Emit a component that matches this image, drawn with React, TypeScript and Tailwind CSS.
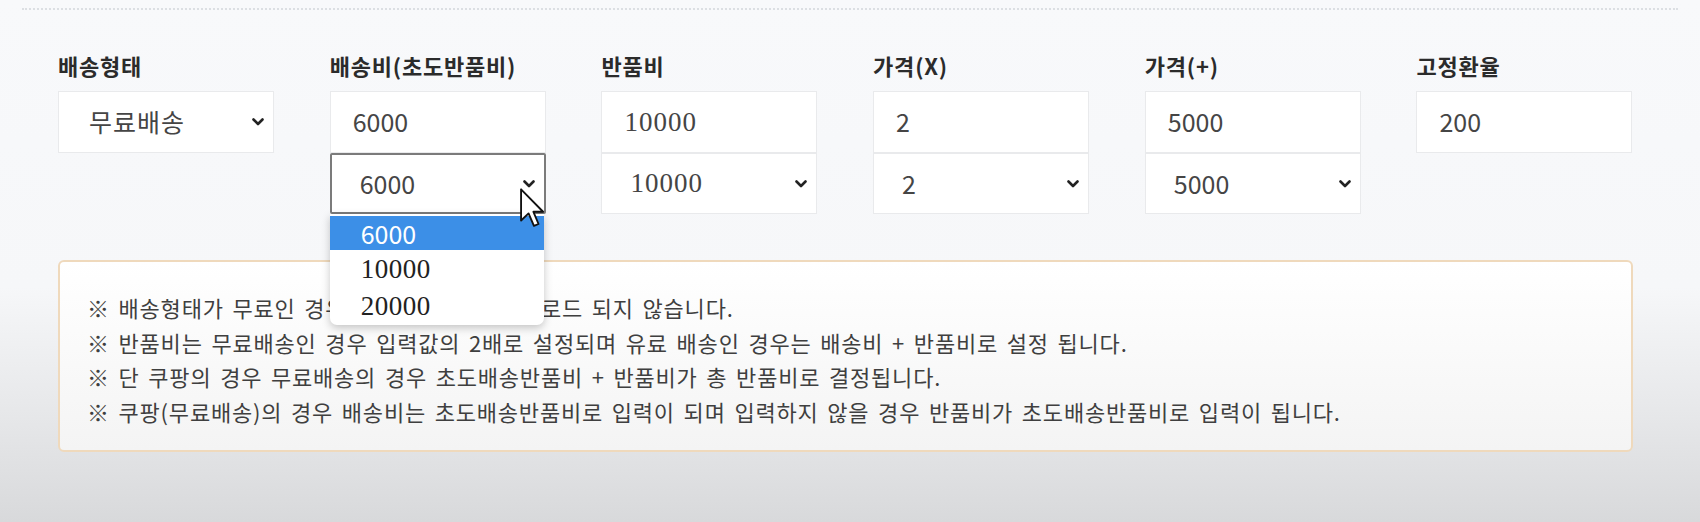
import React from 'react';

const SANS = "font-['Noto_Sans_CJK_KR','Noto_Sans',sans-serif]";
const SERIF = "font-['Liberation_Serif','Noto_Sans_CJK_KR',serif]";

type Field = { value: string; serif?: boolean };
type Column = {
  label: string;
  top: Field & { kind: 'input' | 'select' };
  bottom?: Field & { active?: boolean };
};

const columns: Column[] = [
  { label: '배송형태', top: { kind: 'select', value: '무료배송' } },
  { label: '배송비(초도반품비)', top: { kind: 'input', value: '6000' }, bottom: { value: '6000', active: true } },
  { label: '반품비', top: { kind: 'input', value: '10000', serif: true }, bottom: { value: '10000', serif: true } },
  { label: '가격(X)', top: { kind: 'input', value: '2' }, bottom: { value: '2' } },
  { label: '가격(+)', top: { kind: 'input', value: '5000' }, bottom: { value: '5000' } },
  { label: '고정환율', top: { kind: 'input', value: '200' } },
];

const notes = [
  '※ 배송형태가 무료인 경우 배송비 데이터는 업로드 되지 않습니다.',
  '※ 반품비는 무료배송인 경우 입력값의 2배로 설정되며 유료 배송인 경우는 배송비 + 반품비로 설정 됩니다.',
  '※ 단 쿠팡의 경우 무료배송의 경우 초도배송반품비 + 반품비가 총 반품비로 결정됩니다.',
  '※ 쿠팡(무료배송)의 경우 배송비는 초도배송반품비로 입력이 되며 입력하지 않을 경우 반품비가 초도배송반품비로 입력이 됩니다.',
];

const Chevron = () => (
  <svg width="12" height="8" viewBox="0 0 12 8" className="absolute right-[9px] top-1/2 -translate-y-1/2">
    <polyline points="1.5,1.5 6,6 10.5,1.5" fill="none" stroke="#222" strokeWidth="2.6" strokeLinecap="round" strokeLinejoin="round" />
  </svg>
);

const Cursor = () => (
  <svg width="27" height="42" viewBox="0 0 13 20" className="absolute left-[187px] top-[32px] z-20">
    <path d="M1 1 L1 16 L4.6 12.6 L7.2 18.6 L9.4 17.7 L6.9 11.8 L11.6 11.8 Z" fill="#fff" stroke="#111" strokeWidth="0.9" strokeLinejoin="round" />
  </svg>
);

const Dropdown = () => (
  <div className={`absolute left-[-2px] top-[59px] z-10 w-[214px] h-[111px] bg-white rounded-b-[7px] shadow-[0_3px_8px_rgba(0,0,0,0.22)] pt-[2px] ${SERIF} text-[27px] tracking-[0.5px] text-[#222]`}>
    <div className={`h-[34px] bg-[#3c8fe7] text-white pl-[31px] leading-[34px] ${SANS} text-[25px] tracking-normal`}>6000</div>
    <div className="h-[37px] pl-[31px] leading-[38px]">10000</div>
    <div className="h-[37px] pl-[31px] leading-[38px]">20000</div>
  </div>
);

export default function App() {
  return (
    <div className={`w-full h-[522px] overflow-hidden bg-[linear-gradient(to_bottom,#f8f9fb_0%,#f6f7f9_55%,#e6e7e9_80%,#d8d9db_100%)] ${SANS}`}>
      <div className="pt-[8px] px-[22px]">
        <div className="border-t-2 border-dotted border-[#dcdfe3]" />
      </div>

      <div className="mt-[40px] pl-[58px] grid grid-cols-[repeat(6,216px)] gap-x-[55.7px]">
        {columns.map((col) => (
          <div key={col.label} className="flex flex-col">
            <div className="h-[30px] leading-[30px] mb-[11px] text-[22px] font-bold text-[#2b2b2b] tracking-[0.8px]">{col.label}</div>
            <div className="relative h-[62px] bg-white border border-[#e9eaec] flex items-center">
              <span
                className={`${col.top.kind === 'select' ? 'pl-[30px] tracking-[1px]' : 'pl-[22px]'} text-[#454545] ${
                  col.top.serif ? SERIF + ' text-[27px] tracking-[1px]' : 'text-[25px]'
                }`}
              >
                {col.top.value}
              </span>
              {col.top.kind === 'select' && <Chevron />}
            </div>
            {col.bottom && (
              <div
                className={`relative h-[61px] bg-white flex items-center ${
                  col.bottom.active ? 'border-2 border-[#7b7b7b] rounded-[2px]' : 'border border-[#e9eaec]'
                }`}
              >
                <span className={`pl-[28px] text-[#454545] ${col.bottom.serif ? SERIF + ' text-[27px] tracking-[1px]' : 'text-[25px]'}`}>
                  {col.bottom.value}
                </span>
                <Chevron />
                {col.bottom.active && (
                  <>
                    <Dropdown />
                    <Cursor />
                  </>
                )}
              </div>
            )}
          </div>
        ))}
      </div>

      <div className="mt-[46px] ml-[58px] w-[1575px] h-[192px] rounded-[6px] border-2 border-[#efd9bc] bg-[linear-gradient(to_bottom,#ffffff,#f4f4f4)] pl-[27px] pt-[28px]">
        {notes.map((n) => (
          <p key={n} className="text-[22px] leading-[34.5px] text-[#3f3f3f] tracking-[0.8px] [word-spacing:3px]">{n}</p>
        ))}
      </div>
    </div>
  );
}
